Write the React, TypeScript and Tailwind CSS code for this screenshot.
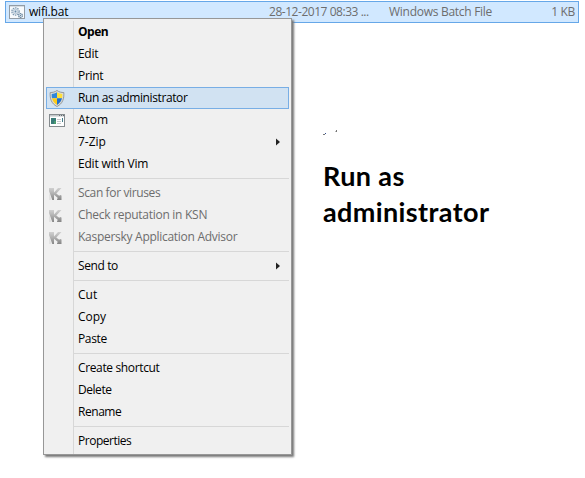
import type { ReactNode } from "react";

function GearsIcon() {
  return (
    <svg width="16" height="14" viewBox="0 0 16 14" fill="none">
      <rect x=".5" y=".5" width="15" height="13" fill="#f7fafc" stroke="#929ca5" />
      <path d="M1 1.5h14" stroke="#d5dce3" />
      <circle cx="6.5" cy="6.5" r="3.6" stroke="#7d98b0" strokeWidth="1.3" strokeDasharray="1.5 .8" />
      <circle cx="6.5" cy="6.5" r="2.4" fill="#d7e2eb" stroke="#a9bccb" strokeWidth=".7" />
      <circle cx="6.5" cy="6.5" r=".9" fill="#668aa7" />
      <circle cx="11.5" cy="10.5" r="1.9" fill="#e4edf4" stroke="#66859e" strokeWidth="1.2" strokeDasharray="1.3 .5" />
      <circle cx="11.5" cy="10.5" r=".6" fill="#54728c" />
    </svg>
  );
}

function ShieldIcon() {
  return (
    <svg width="16" height="17" viewBox="0 0 16 17">
      <path d="M8 .5C6 2 3.5 2.6 1.2 2.5.8 8.5 2.2 13.6 8 16.5c5.8-2.9 7.2-8 6.8-14C12.5 2.6 10 2 8 .5Z" fill="#dcdcd8" stroke="#8b9092" strokeWidth=".9" />
      <path d="M8 2.2C6.2 3.3 4.6 3.8 2.7 3.9c-.1 1.6 0 3 .3 4.4h5Z" fill="#2f86da" />
      <path d="M8 2.2c1.8 1.1 3.4 1.6 5.3 1.7.1 1.6 0 3-.3 4.4H8Z" fill="#ffdf3a" />
      <path d="M3 8.3c.7 3.1 2.2 5 5 6.6V8.3Z" fill="#fccb1a" />
      <path d="M13 8.3c-.7 3.1-2.2 5-5 6.6V8.3Z" fill="#1f6fcb" />
    </svg>
  );
}

function WindowIcon() {
  return (
    <svg width="16" height="13" viewBox="0 0 16 13" shapeRendering="crispEdges">
      <path d="M0 0h16v13H0z" fill="#858b8e" />
      <path d="M1 3h14v9H1z" fill="#fff" />
      <path d="M1 1h14v1H1z" fill="#c4c9cb" />
      <path d="M1 2h14v1H1z" fill="#dde0e1" />
      <path d="M10 1h1v1h-1zM12 1h1v1h-1zM14 1h1v1h-1z" fill="#646b70" />
      <path d="M2 4h5v6H2z" fill="#397c78" />
      <path d="M5 7h2v3H5z" fill="#4b9b70" />
      <path d="M8 5h4v1H8zM8 7h4v1H8zM8 9h4v1H8z" fill="#c5c9cc" />
      <path d="M13 4h1v4h-1z" fill="#427d89" />
    </svg>
  );
}

function KasperskyIcon() {
  return (
    <svg width="13" height="13" viewBox="0 0 13 13">
      <defs>
        <linearGradient id="silver" x1="0" y1="0" x2="0" y2="13" gradientUnits="userSpaceOnUse">
          <stop stopColor="#d6d6d6" />
          <stop offset=".45" stopColor="#b5b5b5" />
          <stop offset="1" stopColor="#858585" />
        </linearGradient>
      </defs>
      <path d="M0 1h5v4.5L9 1h3.5L7.3 6.5l2.9 2.2L11.2 8l1.3.5V13H8l.2-1.3.7-.8L5 7.8V13H3.3L0 4Z" fill="url(#silver)" />
      <path d="M0 5.5 2.6 13H0Z" fill="#c4c4c4" opacity=".3" />
    </svg>
  );
}

type RowProps = {
  label: string;
  tracking?: string;
  icon?: ReactNode;
  bold?: boolean;
  disabled?: boolean;
  arrow?: boolean;
  active?: boolean;
};

function Row({ label, tracking = "tracking-[-0.3px]", icon, bold, disabled, arrow, active }: RowProps) {
  return (
    <div className={`mx-[2px] flex h-[22px] shrink-0 items-center border ${active ? "border-[#78aee5] bg-[#d1e2f2]" : "border-transparent"}`}>
      <span className="flex w-[31px] shrink-0 justify-start pl-[2px]">{icon}</span>
      <span className={`whitespace-nowrap leading-[20px] ${tracking} ${bold ? "font-bold" : ""} ${disabled ? "text-[#6d6d6d]" : "text-black"}`}>{label}</span>
      {arrow && (
        <svg className="ml-auto mr-[8px]" width="4" height="8" viewBox="0 0 4 8">
          <path d="M0 .5 4 4 0 7.5Z" fill="#222" />
        </svg>
      )}
    </div>
  );
}

function Separator() {
  return (
    <div className="flex h-[7px] shrink-0 items-center pl-[30px] pr-[2px]">
      <div className="h-px w-full bg-[#d7d7d7]" />
    </div>
  );
}

export default function App() {
  return (
    <main className="relative h-[478px] w-[585px] overflow-hidden bg-white pl-[5px] pt-px font-['Open_Sans','Noto_Sans',sans-serif] text-[12px] text-black">
      <div className="flex h-[22px] w-[574px] items-center border border-[#66a7e8] bg-[#d1e8ff] pl-[3px] pr-[3px] text-[#6d6d6d]">
        <GearsIcon />
        <span className="ml-[4px] w-[240px] tracking-[-0.2px] text-black">wifi.bat</span>
        <span className="w-[120px] whitespace-nowrap tracking-[-0.46px]">28-12-2017 08:33 ...</span>
        <span className="whitespace-nowrap tracking-[-0.28px]">Windows Batch File</span>
        <span className="ml-auto whitespace-nowrap tracking-[-0.35px]">1 KB</span>
      </div>

      <h1 className="ml-[318px] mt-[135px] w-[190px] font-['Lato',sans-serif] text-[27px] font-bold leading-[36px] tracking-[0.38px]">
        Run as administrator
      </h1>

      <svg className="absolute left-[323px] top-[129px]" width="15" height="7" viewBox="0 0 15 7" shapeRendering="crispEdges">
        <path d="M0 5h2v1H0zM13 1h1v2h-1z" fill="#777" />
        <path d="M2 4h1v1H2z" fill="#304d91" />
        <path d="M12 2h1v1h-1z" fill="#bbb" />
      </svg>

      <nav className="absolute left-[43px] top-[18px] flex h-[437px] w-[249px] flex-col border border-[#979797] bg-[#f0f0f0] bg-[linear-gradient(#d7d7d7,#d7d7d7)] bg-[length:1px_433px] bg-[position:29px_2px] bg-no-repeat pt-[2px] shadow-[2px_2px_2px_0px_#777777]">
        <Row label="Open" bold tracking="tracking-[-0.5px]" />
        <Row label="Edit" />
        <Row label="Print" />
        <Row label="Run as administrator" tracking="tracking-[-0.39px]" icon={<ShieldIcon />} active />
        <Row label="Atom" tracking="tracking-[0px]" icon={<WindowIcon />} />
        <Row label="7-Zip" tracking="tracking-[0px]" arrow />
        <Row label="Edit with Vim" tracking="tracking-[-0.2px]" />
        <Separator />
        <Row label="Scan for viruses" tracking="tracking-[-0.37px]" icon={<KasperskyIcon />} disabled />
        <Row label="Check reputation in KSN" tracking="tracking-[-0.28px]" icon={<KasperskyIcon />} disabled />
        <Row label="Kaspersky Application Advisor" tracking="tracking-[-0.28px]" icon={<KasperskyIcon />} disabled />
        <Separator />
        <Row label="Send to" tracking="tracking-[-0.4px]" arrow />
        <Separator />
        <Row label="Cut" tracking="tracking-[0px]" />
        <Row label="Copy" tracking="tracking-[-0.05px]" />
        <Row label="Paste" tracking="tracking-[-0.35px]" />
        <Separator />
        <Row label="Create shortcut" tracking="tracking-[-0.36px]" />
        <Row label="Delete" tracking="tracking-[-0.45px]" />
        <Row label="Rename" tracking="tracking-[-0.45px]" />
        <Separator />
        <Row label="Properties" tracking="tracking-[-0.48px]" />
      </nav>
    </main>
  );
}
